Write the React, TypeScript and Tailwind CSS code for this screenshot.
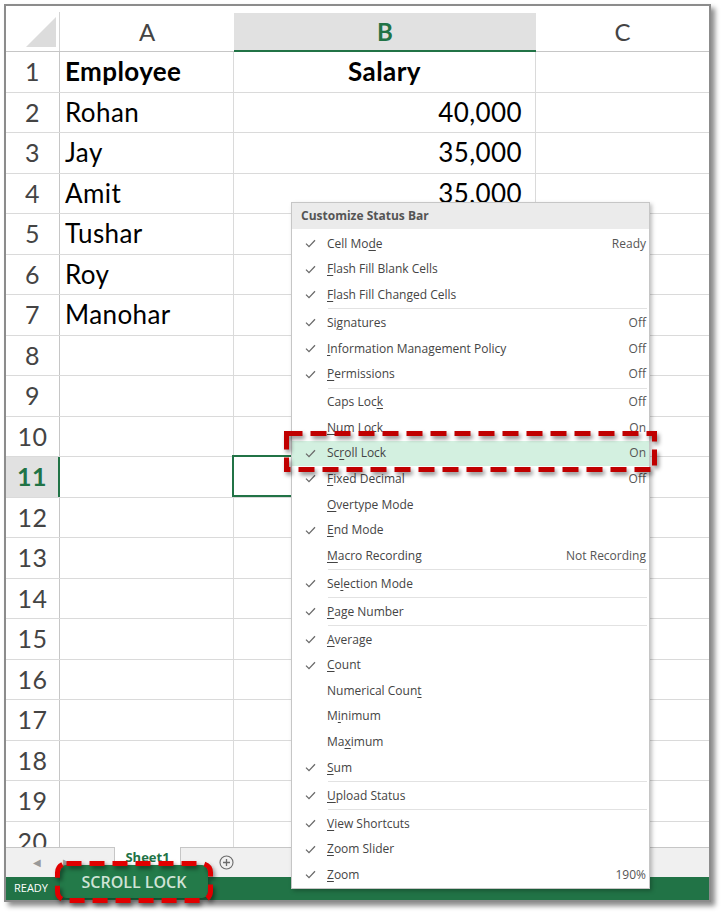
import React from "react";

type Item =
  | { label: string; checked?: boolean; value?: string; active?: boolean }
  | "sep";

// "&" marks the access key that gets underlined
const items: Item[] = [
  { label: "Cell Mo&de", checked: true, value: "Ready" },
  { label: "&Flash Fill Blank Cells", checked: true },
  { label: "&Flash Fill Changed Cells", checked: true },
  "sep",
  { label: "Si&gnatures", checked: true, value: "Off" },
  { label: "&Information Management Policy", checked: true, value: "Off" },
  { label: "&Permissions", checked: true, value: "Off" },
  "sep",
  { label: "Caps Loc&k", value: "Off" },
  { label: "&Num Lock", value: "On" },
  { label: "Sc&roll Lock", checked: true, value: "On", active: true },
  { label: "&Fixed Decimal", checked: true, value: "Off" },
  { label: "&Overtype Mode" },
  { label: "&End Mode", checked: true },
  { label: "&Macro Recording", value: "Not Recording" },
  "sep",
  { label: "Se&lection Mode", checked: true },
  "sep",
  { label: "&Page Number", checked: true },
  "sep",
  { label: "&Average", checked: true },
  { label: "&Count", checked: true },
  { label: "Numerical Coun&t" },
  { label: "M&inimum" },
  { label: "Ma&ximum" },
  { label: "&Sum", checked: true },
  "sep",
  { label: "&Upload Status", checked: true },
  "sep",
  { label: "&View Shortcuts", checked: true },
  { label: "&Zoom Slider", checked: true },
  { label: "&Zoom", checked: true, value: "190%" },
];

const rows: { a?: string; b?: string; head?: boolean }[] = [
  { a: "Employee", b: "Salary", head: true },
  { a: "Rohan", b: "40,000" },
  { a: "Jay", b: "35,000" },
  { a: "Amit", b: "35,000" },
  { a: "Tushar" },
  { a: "Roy" },
  { a: "Manohar" },
  ...Array.from({ length: 13 }, () => ({})),
];

function Label({ text }: { text: string }) {
  const i = text.indexOf("&");
  if (i < 0) return <>{text}</>;
  return (
    <>
      {text.slice(0, i)}
      <span className="underline decoration-1 underline-offset-[2px]">{text[i + 1]}</span>
      {text.slice(i + 2)}
    </>
  );
}

function Check() {
  return (
    <svg width="11" height="9" viewBox="0 0 11 9" fill="none">
      <path d="M1 4.6 L4 7.6 L10 1.2" stroke="#6a6a6a" strokeWidth="1.3" />
    </svg>
  );
}

function StatusMenu() {
  return (
    <div
      className="absolute left-[291px] top-[202px] w-[359px] border border-[#c6c6c6] bg-white shadow-[2px_2px_4px_rgba(0,0,0,0.25)] text-[12px] text-[#444]"
      style={{ fontFamily: '"Open Sans", "Noto Sans", sans-serif' }}
    >
      <div className="h-[26px] bg-[#ebebeb] pl-[9px] flex items-center font-bold text-[#555]">
        Customize Status Bar
      </div>
      <div className="pt-[2px]">
        {items.map((it, i) =>
          it === "sep" ? (
            <div key={i} className="h-[2.4px] flex items-center pl-[36px] pr-[2px]">
              <div className="h-px w-full bg-[#e2e2e2]" />
            </div>
          ) : (
            <div
              key={i}
              className={`h-[25.6px] flex items-center pr-[3px] ${it.active ? "bg-[#d3f0e0]" : ""}`}
            >
              <div className="w-[35px] flex justify-center pl-[2px]">{it.checked && <Check />}</div>
              <div className="flex-1 whitespace-nowrap">
                <Label text={it.label} />
              </div>
              {it.value && <div className="text-[#555] whitespace-nowrap">{it.value}</div>}
            </div>
          )
        )}
      </div>
    </div>
  );
}

function Sheet() {
  const cell = "h-full border-r border-[#dadada] flex items-center";
  return (
    <div
      className="w-[707px] h-[898px] border-2 border-[#8c8c8c] bg-white flex flex-col shadow-[4px_4px_5px_rgba(0,0,0,0.45)]"
      style={{ fontFamily: "Lato, Carlito, sans-serif" }}
    >
      {/* column headers */}
      <div className="h-[46px] flex items-end border-b border-[#c6c6c6] text-[24px] text-[#444] shrink-0">
        <div className="relative w-[54px] h-[39px] border-r border-[#d4d4d4]">
          <svg className="absolute left-[20px] top-[5px]" width="30" height="30" viewBox="0 0 30 30">
            <polygon points="0,30 30,0 30,30" fill="#dcdcdc" />
          </svg>
        </div>
        <div className="w-[174px] h-[39px] flex items-center justify-center">A</div>
        <div className="w-[302px] h-[39px] flex items-center justify-center bg-[#e1e1e1] border-b-2 border-[#217346] font-bold text-[#217346] -mb-px">
          B
        </div>
        <div className="w-[173px] h-[39px] flex items-center justify-center">C</div>
      </div>

      {/* grid */}
      <div className="flex-1 overflow-hidden text-[26px] tracking-[0.4px] text-black">
        {rows.map((r, i) => {
          const n = i + 1;
          const sel = n === 11;
          return (
            <div key={n} className="h-[40.5px] flex border-b border-[#dadada]">
              <div
                className={`w-[54px] h-full flex items-center justify-center text-[25px] ${
                  sel
                    ? "bg-[#e1e1e1] font-bold text-[#217346] border-r-2 border-[#217346]"
                    : "text-[#444] border-r border-[#c6c6c6]"
                }`}
              >
                {n}
              </div>
              <div className={`w-[174px] pl-[5px] ${cell} ${r.head ? "font-bold" : ""}`}>{r.a}</div>
              <div
                className={`relative w-[302px] ${cell} ${
                  r.head ? "justify-center font-bold" : "justify-end pr-[13px]"
                }`}
              >
                {r.b}
                {sel && <div className="absolute -left-[2px] -top-[2px] w-[304px] h-[42px] border-2 border-[#217346]" />}
              </div>
              <div className="w-[173px] h-full" />
            </div>
          );
        })}
      </div>

      {/* sheet tabs */}
      <div
        className="h-[30px] shrink-0 flex bg-[#f0f0f0] text-[#999]"
        style={{ fontFamily: '"Open Sans", sans-serif' }}
      >
        <div className="w-[108px] border-t border-[#c6c6c6] flex items-center gap-[22px] pl-[27px] text-[10px]">
          <span>◀</span>
          <span>▶</span>
        </div>
        <div className="w-[67px] bg-white border-x border-[#c6c6c6] flex justify-center pt-[1px] text-[13px] font-bold text-[#217346]">
          Sheet1
        </div>
        <div className="flex-1 border-t border-[#c6c6c6] pl-[38px] flex items-center">
          <svg width="15" height="15" viewBox="0 0 15 15" fill="none">
            <circle cx="7.5" cy="7.5" r="6.5" stroke="#6b6b6b" strokeWidth="1.1" />
            <path d="M7.5 4 V11 M4 7.5 H11" stroke="#6b6b6b" strokeWidth="1.3" />
          </svg>
        </div>
      </div>

      {/* status bar */}
      <div
        className="h-[23px] shrink-0 bg-[#217346] text-white text-[11px] pl-[8px] flex items-center"
        style={{ fontFamily: '"Open Sans", sans-serif' }}
      >
        READY
      </div>
    </div>
  );
}

export default function App() {
  return (
    <div className="relative w-[725px] h-[918px] bg-white overflow-hidden">
      <div className="pl-[4px] pt-[4px]">
        <Sheet />
      </div>

      <StatusMenu />

      {/* callout: scroll lock menu row */}
      <svg
        className="absolute left-[279px] top-[426px] drop-shadow-[2px_3px_2px_rgba(0,0,0,0.45)]"
        width="384"
        height="52"
      >
        <rect x="7.5" y="7.5" width="368" height="36" fill="none" stroke="#c00000" strokeWidth="5" strokeDasharray="16 8" />
      </svg>

      {/* callout: status bar indicator */}
      <div
        className="absolute left-[60px] top-[865px] w-[148px] h-[33px] rounded-[6px] bg-[#237a49] shadow-[2px_2px_4px_rgba(0,0,0,0.4)] flex items-center justify-center text-[16px] font-semibold text-[#cfe3d6]"
        style={{ fontFamily: '"Open Sans", sans-serif' }}
      >
        SCROLL LOCK
      </div>
      <svg
        className="absolute left-[50px] top-[856px] drop-shadow-[2px_3px_2px_rgba(0,0,0,0.45)]"
        width="168"
        height="52"
      >
        <rect x="7.5" y="7.5" width="153" height="37" rx="9" fill="none" stroke="#e00000" strokeWidth="5" strokeDasharray="15 8" />
      </svg>
    </div>
  );
}
